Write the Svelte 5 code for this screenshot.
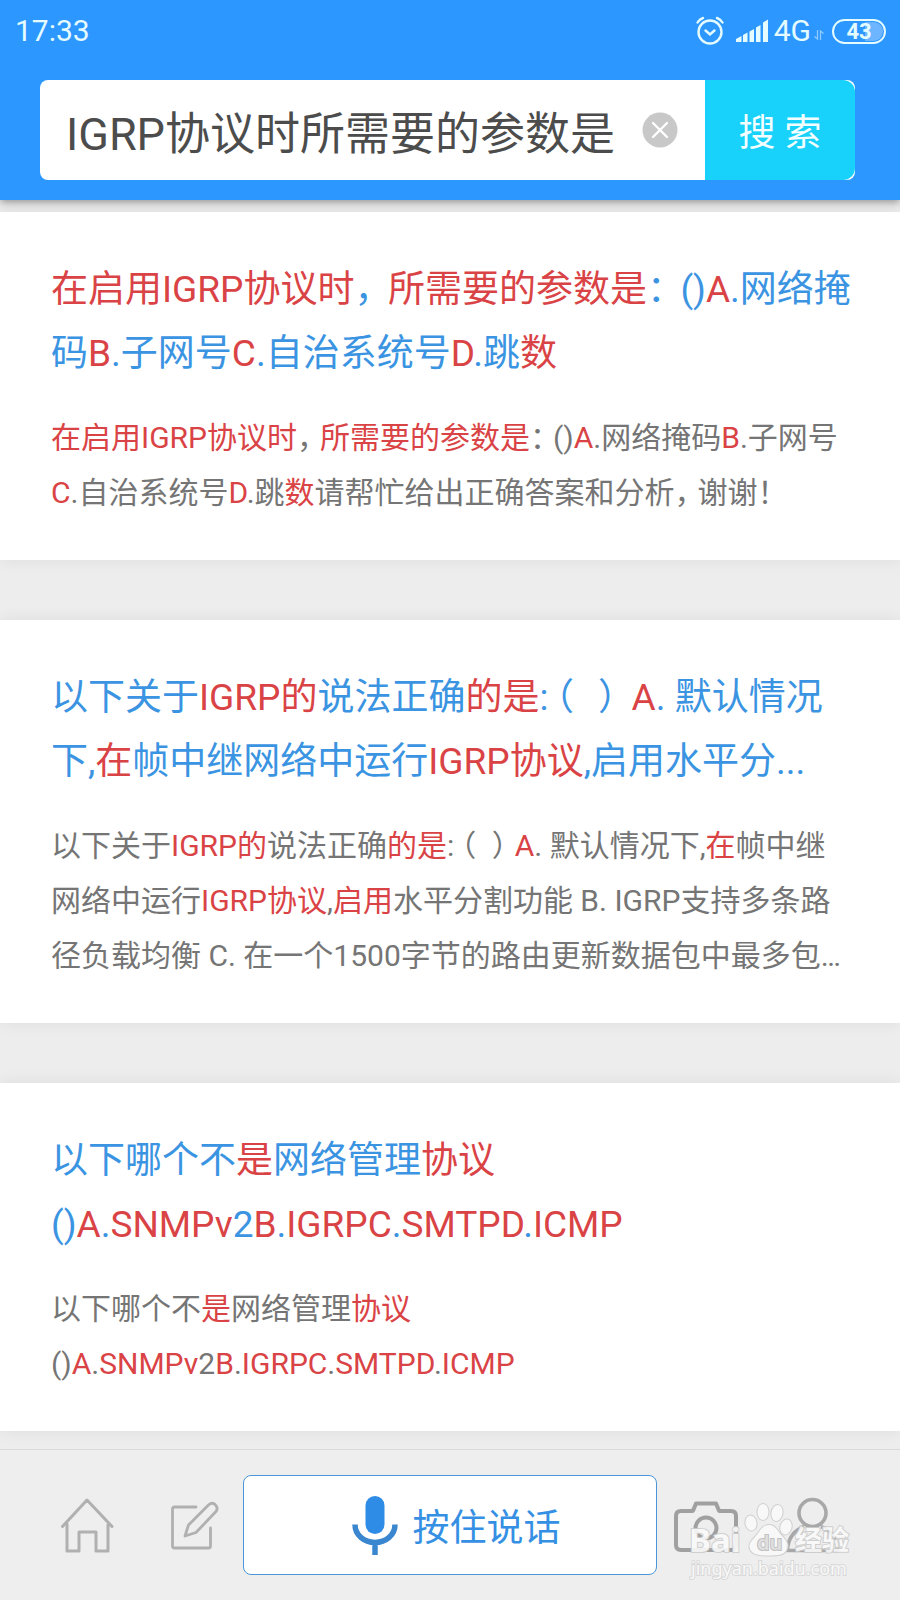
<script>
  let query = $state('IGRP协议时所需要的参数是');

  // Square brackets mark the parts that match the query.
  const results = [
    {
      title: ['[在启用IGRP协议时]，[所需要的参数是]：()[A].网络掩', '码[B].子网号[C].自治系统号[D].跳[数]'],
      body: [
        '[在启用IGRP协议时]，[所需要的参数是]：()[A].网络掩码[B].子网号',
        '[C].自治系统号[D].跳[数]请帮忙给出正确答案和分析，谢谢！'
      ]
    },
    {
      title: ['以下关于[IGRP的]说法正确[的是]:（ ）[A]. 默认情况', '下,[在]帧中继网络中运行[IGRP协议],启用水平分...'],
      body: [
        '以下关于[IGRP的]说法正确[的是]:（ ）[A]. 默认情况下,[在]帧中继',
        '网络中运行[IGRP协议],[启用]水平分割功能 B. IGRP支持多条路',
        '径负载均衡 C. 在一个1500字节的路由更新数据包中最多包…'
      ]
    },
    {
      title: ['以下哪个不[是]网络管理[协议]', '()[A].[SNMPv]2[B].[IGRPC].[SMTPD].[ICMP]'],
      body: ['以下哪个不[是]网络管理[协议]', '()[A].[SNMPv]2[B].[IGRPC].[SMTPD].[ICMP]']
    }
  ];

  const kind = (s) => {
    if (s[0] === '[') return { text: s.slice(1, -1), type: 'hit' };
    if (/^[，：）]$/.test(s)) return { text: s, type: 'punct' };
    if (s === '（') return { text: s, type: 'punct open' };
    return { text: s, type: '' };
  };

  const split = (line) =>
    line
      .split(/(\[[^\]]*\]|[，：（）])/)
      .filter(Boolean)
      .map(kind);
</script>

{#snippet lines(list)}
  {#each list as line}
    <span class="line">{#each split(line) as part}{#if part.type === 'hit'}<em>{part.text}</em>{:else if part.type}<span class={part.type}>{part.text}</span>{:else}{part.text}{/if}{/each}</span>
  {/each}
{/snippet}

<div class="page">
  <header>
    <div class="status">
      <time>17:33</time>
      <div class="signals">
        <svg width="28" height="30" viewBox="0 0 28 30" fill="none" stroke="#e4fbff" stroke-width="2.4" stroke-linecap="round" aria-hidden="true">
          <circle cx="14" cy="16" r="11.5" />
          <path d="M9.5 14.5l4.500 4 4.500-4M1.500 6.500Q3.500 3.200 7 2M26.500 6.500Q24.500 3.200 21 2" />
        </svg>
        <svg class="bars" width="33" height="24" viewBox="0 0 33 24" fill="#e4fbff" aria-hidden="true">
          <path d="M0 23V20l5.500-3v6zM7 16l4.500-2.500V23H7zM13.500 12.500l4.500-2.500v13h-4.500zM20 8.500l4.500-2.500v17H20zM27 3.500l5-3V23h-5z" />
        </svg>
        <span>4G</span>
        <svg class="arrows" width="10" height="10" viewBox="0 0 10 10" fill="none" stroke="#8fcbff" stroke-width="1.300" aria-hidden="true">
          <path d="M3.500 0v9L.5 6.500M6.500 10V1l3 2.500" />
        </svg>
        <span class="battery">43</span>
      </div>
    </div>
    <form class="search" onsubmit={(e) => e.preventDefault()}>
      <input type="text" aria-label="搜索内容" bind:value={query} />
      <button type="button" class="clear" aria-label="清除" onclick={() => (query = '')}>
        <svg width="36" height="36" viewBox="0 0 36 36" aria-hidden="true">
          <circle cx="18" cy="18" r="17.500" fill="#c8c8c8" />
          <path d="M11 11l14 14M25 11L11 25" stroke="#fff" stroke-width="2.400" stroke-linecap="round" />
        </svg>
      </button>
      <button type="submit" class="go">搜 索</button>
    </form>
  </header>

  <main>
    {#each results as r}
      <article>
        <h2>{@render lines(r.title)}</h2>
        <p>{@render lines(r.body)}</p>
      </article>
    {/each}
  </main>

  <footer>
    <button type="button" class="tab" aria-label="首页">
      <svg width="54" height="56" viewBox="0 0 54 56" fill="none" stroke="#b0b0b0" stroke-width="3" stroke-linejoin="round" stroke-linecap="round" aria-hidden="true">
        <path d="M1.500 29.500L26 3l25 26.500M6 27v27h12V35h17v19h12V27" />
      </svg>
    </button>
    <button type="button" class="tab" aria-label="编辑">
      <svg width="48" height="50" viewBox="0 0 48 50" fill="none" stroke="#b0b0b0" stroke-width="2.800" stroke-linejoin="round" stroke-linecap="round" aria-hidden="true">
        <path d="M25 7H3.500q-2 0-2 2V46q0 2 2 2h34q2 0 2-2V28" />
        <path d="M14 36L17.500 25 37.500 5q4-3.500 7 0 3.300 3.300 0 7L25 32.500z" />
      </svg>
    </button>
    <button type="button" class="voice">
      <svg width="46" height="60" viewBox="0 0 46 60" aria-hidden="true">
        <rect x="13.500" y="1" width="19" height="38" rx="9.500" fill="#2e8be6" />
        <path d="M3 29.500C3 40 12 47.500 23 47.500S43 40 43 29.500M23 47v13" fill="none" stroke="#3a86cf" stroke-width="5.500" />
      </svg>
      <span>按住说话</span>
    </button>
    <button type="button" class="tab" aria-label="拍照">
      <svg width="64" height="56" viewBox="0 0 64 56" fill="none" stroke="#a0a0a0" stroke-width="4" stroke-linejoin="round" aria-hidden="true">
        <path d="M7 14h10.500q1.500 0 2-1.500l2.500-6h20l2.500 6q.5 1.500 2 1.500H57q5 0 5 5v29q0 5-5 5H7q-5 0-5-5v-29q0-5 5-5z" />
        <circle cx="32" cy="31" r="10.500" />
      </svg>
    </button>
    <button type="button" class="tab" aria-label="我的">
      <svg width="54" height="56" viewBox="0 0 54 56" fill="none" stroke="#a8a8a8" stroke-width="3.600" stroke-linejoin="round" aria-hidden="true">
        <circle cx="26.500" cy="16" r="13.500" />
        <path d="M18 29.500Q2 36 1.500 53.500h50Q51 36 35 29.500" />
      </svg>
    </button>

    <svg class="mark" width="180" height="90" viewBox="0 0 180 90" role="img" aria-label="Baidu经验">
      <g fill="#fafafa" stroke="#cccccc" stroke-width="2" paint-order="stroke">
        <text x="9" y="52" font-size="33" font-weight="700">Bai</text>
        <ellipse cx="71" cy="23" rx="5.500" ry="7.500" transform="rotate(-10 71 23)" />
        <ellipse cx="83" cy="12" rx="5.500" ry="8" />
        <ellipse cx="97" cy="13" rx="5.500" ry="8" transform="rotate(10 97 13)" />
        <ellipse cx="106" cy="27" rx="5.500" ry="7.500" transform="rotate(16 106 27)" />
        <path d="M89 25c7 0 9 7 13.500 11.500 4 4 6.500 8 4.500 12.500-2.500 6-9 6.500-18 6.500s-16.500-.5-19-6.500c-2-4.500 1.500-8.500 5-12C79.500 32 82 25 89 25z" />
        <text x="115" y="50" font-size="27" font-weight="700">经验</text>
        <text x="11" y="75" font-size="18" stroke="#d6d6d6">jingyan.baidu.com</text>
        <text x="77" y="50" font-size="20" font-weight="600" fill="#dedede" stroke="#bdbdbd">du</text>
      </g>
    </svg>
  </footer>
</div>

<style>
  :global(body) {
    margin: 0;
    background: #ededed;
  }

  .page {
    min-height: 100vh;
    display: flex;
    flex-direction: column;
    font-family: Roboto, 'Noto Sans CJK SC', sans-serif;
    background: #ededed;
  }

  button,
  input {
    font: inherit;
    border: 0;
    margin: 0;
    padding: 0;
    background: none;
  }

  header {
    position: sticky;
    top: 0;
    z-index: 1;
    background: #2c97ff;
    padding: 0 45px 20px 40px;
    box-shadow: 0 2px 8px rgba(0, 0, 0, 0.4);
  }

  .status {
    display: flex;
    align-items: center;
    justify-content: space-between;
    height: 62px;
    margin: 0 -31px 18px -25px;
    color: #e4fbff;
    font-size: 30px;
    line-height: 36px;
  }

  .signals {
    display: flex;
    align-items: center;
  }

  .bars {
    margin: 0 5px 0 12px;
  }

  .arrows {
    margin: 8px 8px 0 3px;
  }

  .battery {
    box-sizing: border-box;
    width: 54px;
    height: 25px;
    border: 2px solid #e4fbff;
    border-radius: 13px;
    background: linear-gradient(90deg, transparent 62%, #6db5ff 62%) content-box;
    padding: 1px;
    text-align: center;
    font-size: 22px;
    line-height: 19px;
    font-weight: 700;
    overflow: hidden;
  }

  .search {
    display: flex;
    align-items: center;
    height: 100px;
    background: #fff;
    border-radius: 8px;
  }

  input {
    flex: 1;
    min-width: 0;
    height: 100%;
    padding-left: 26px;
    font-size: 45px;
    color: #4c4c4c;
    outline: none;
  }

  .clear {
    display: flex;
    margin: 0 27px 0 8px;
  }

  .go {
    width: 150px;
    height: 100%;
    background: #18d2fb;
    border-radius: 0 12px 12px 0;
    color: #f2feff;
    font-size: 37px;
  }

  main {
    flex: 1;
    display: flex;
    flex-direction: column;
    gap: 60px;
    padding: 12px 0 18px;
  }

  article {
    background: #fff;
    padding: 46px 40px 40px 51px;
    box-shadow: 0 0 16px rgba(0, 0, 0, 0.07);
  }

  h2,
  p {
    margin: 0;
    font-weight: 400;
  }

  h2 {
    font-size: 37px;
    line-height: 64px;
    color: #3b94e2;
    margin-bottom: 24px;
  }

  p {
    font-size: 30px;
    line-height: 55px;
    color: #757575;
  }

  .line {
    display: block;
  }

  em {
    font-style: normal;
    color: #da4345;
  }

  .punct {
    font-feature-settings: 'halt';
    margin-right: 8px;
  }

  h2 .punct {
    margin-right: 15px;
  }

  .open,
  h2 .open {
    margin-left: 7px;
  }

  footer {
    position: sticky;
    bottom: 0;
    display: flex;
    align-items: center;
    height: 150px;
    padding: 0 34px;
    background: #eee;
    border-top: 1px solid #dadada;
  }

  .tab {
    flex: none;
    width: 107px;
    display: flex;
    justify-content: center;
  }

  .voice {
    flex: 1;
    display: flex;
    align-items: center;
    justify-content: center;
    gap: 15px;
    height: 100px;
    margin: 0 -5px;
    padding-left: 12px;
    background: #fff;
    border: 1px solid #4a96d8;
    border-radius: 8px;
    color: #3590e4;
    font-size: 37px;
  }

  .mark {
    position: absolute;
    right: 40px;
    top: 50px;
    pointer-events: none;
    font-family: 'Noto Sans', 'Noto Sans CJK SC', sans-serif;
    opacity: 0.9;
  }
</style>
